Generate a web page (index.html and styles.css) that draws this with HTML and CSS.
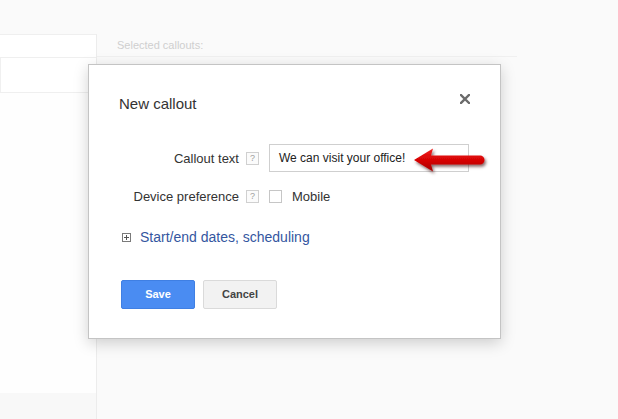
FILE: index.html
```html
<!DOCTYPE html>
<html>
<head>
<meta charset="utf-8">
<link rel="stylesheet" href="styles.css">
</head>
<body>
<div class="page">
  <div class="topbar"></div>
  <div class="main">
    <aside class="side">
      <div class="side-box"></div>
      <div class="side-fill"></div>
      <div class="side-foot"></div>
    </aside>
    <section class="content">
      <div class="content-head">Selected callouts:</div>
    </section>
  </div>

  <div class="dialog">
    <div class="close">
      <svg width="10" height="10" viewBox="0 0 10 10"><path d="M1 1L9 9M9 1L1 9" stroke="#6b6b6b" stroke-width="2.4" stroke-linecap="square"/></svg>
    </div>
    <div class="title">New callout</div>
    <div class="row row-first">
      <div class="label">Callout text</div>
      <div class="help">?</div>
      <div class="input">We can visit your office!</div>
    </div>
    <div class="row row-second">
      <div class="label">Device preference</div>
      <div class="help">?</div>
      <div class="checkbox"></div>
      <div class="check-label">Mobile</div>
    </div>
    <div class="expand">
      <div class="plus">
        <svg width="9" height="9" viewBox="0 0 9 9"><rect x="0.5" y="0.5" width="8" height="8" fill="#fff" stroke="#7a7a7a"/><path d="M2 4.5H7M4.5 2V7" stroke="#555" stroke-width="1"/></svg>
      </div>
      <span class="link">Start/end dates, scheduling</span>
    </div>
    <div class="buttons">
      <div class="btn btn-save">Save</div>
      <div class="btn btn-cancel">Cancel</div>
    </div>
  </div>

  <svg class="arrow" width="84" height="36" viewBox="0 0 84 36">
    <defs>
      <linearGradient id="ag" x1="0" y1="0" x2="0" y2="1">
        <stop offset="0" stop-color="#f02020"/>
        <stop offset="0.55" stop-color="#d40000"/>
        <stop offset="1" stop-color="#a50000"/>
      </linearGradient>
      <filter id="sh" x="-20%" y="-40%" width="140%" height="190%">
        <feDropShadow dx="1.5" dy="2.2" stdDeviation="1.6" flood-color="#300" flood-opacity="0.6"/>
      </filter>
    </defs>
    <path d="M4 14 L23 2.5 L21 9.5 L70 9.5 A4.5 4.5 0 0 1 70 18.5 L21 18.5 L23 25.5 Z" fill="url(#ag)" filter="url(#sh)"/>
  </svg>
</div>
</body>
</html>
```

FILE: styles.css
```css
html, body {
  margin: 0;
  padding: 0;
}
body {
  background: #fafafa;
  font-family: "Liberation Sans", Arial, sans-serif;
  color: #333;
}
.page {
  position: relative;
  width: 618px;
  height: 419px;
  overflow: hidden;
}
.topbar {
  height: 34px;
}
.main {
  display: flex;
  height: 385px;
}
.side {
  width: 96px;
  border-top: 1px solid #efefef;
  border-right: 1px solid #ececec;
  display: flex;
  flex-direction: column;
  background: #fff;
}
.side-box {
  margin-top: 22px;
  height: 34px;
  border-top: 1px solid #efefef;
  border-bottom: 1px solid #efefef;
  border-left: 1px solid #f0f0f0;
}
.side-fill {
  flex: 1;
  background: #fefefe;
}
.side-foot {
  height: 26px;
  background: #f8f8f8;
}
.content {
  display: flex;
  flex-direction: column;
}
.content-head {
  width: 400px;
  height: 22px;
  padding-left: 20px;
  border-bottom: 1px solid #f0f0f0;
  font-size: 11px;
  line-height: 22px;
  color: #cfcfcf;
}
.dialog {
  position: absolute;
  left: 88px;
  top: 64px;
  width: 351px;
  height: 243px;
  padding: 30px 30px 0 30px;
  background: #fff;
  border: 1px solid #c4c4c4;
  box-shadow: 0 4px 14px rgba(0, 0, 0, 0.18);
}
.close {
  position: absolute;
  top: 29px;
  right: 30px;
  width: 10px;
  height: 10px;
  line-height: 0;
}
.title {
  font-size: 15px;
  line-height: 17px;
  color: #333;
}
.row {
  display: flex;
  align-items: center;
  height: 28px;
  font-size: 13px;
}
.row-first {
  margin-top: 32px;
}
.row-second {
  margin-top: 10px;
}
.label {
  width: 120px;
  text-align: right;
  color: #333;
}
.help {
  margin-left: 7px;
  width: 11px;
  height: 11px;
  border: 1px solid #d0d0d0;
  background: #fbfbfb;
  font-size: 9px;
  line-height: 11px;
  text-align: center;
  color: #a0a0a0;
}
.input {
  margin-left: 10px;
  width: 189px;
  height: 26px;
  padding-left: 9px;
  border: 1px solid #cfcfcf;
  font-size: 12px;
  line-height: 26px;
  color: #222;
}
.checkbox {
  margin-left: 10px;
  width: 11px;
  height: 11px;
  border: 1px solid #c6c6c6;
  background: #fff;
}
.check-label {
  margin-left: 10px;
  color: #333;
}
.expand {
  margin-top: 19px;
  display: flex;
  align-items: center;
  height: 17px;
}
.plus {
  margin-left: 3px;
  width: 9px;
  height: 9px;
  line-height: 0;
}
.link {
  margin-left: 9px;
  font-size: 14px;
  line-height: 17px;
  color: #34569f;
}
.buttons {
  margin-top: 34px;
  margin-left: 2px;
  display: flex;
  gap: 8px;
}
.btn {
  width: 72px;
  height: 27px;
  border-radius: 2px;
  font-size: 11px;
  font-weight: bold;
  line-height: 27px;
  text-align: center;
}
.btn-save {
  background: #4a8cf2;
  border: 1px solid #3f7fe3;
  color: #fff;
}
.btn-cancel {
  background: #f2f2f2;
  border: 1px solid #dadada;
  color: #444;
}
.arrow {
  position: absolute;
  left: 410px;
  top: 146px;
}
```
